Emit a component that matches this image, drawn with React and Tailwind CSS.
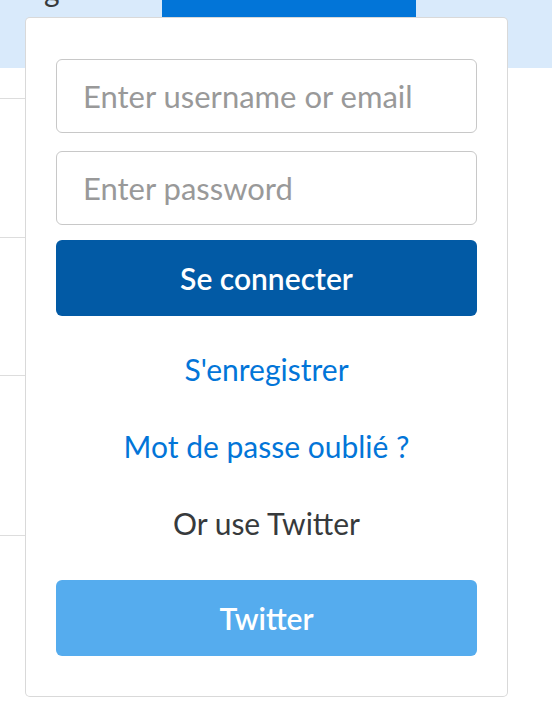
import React from "react";

const App = () => {
  return (
    <div
      className="relative min-h-[714px] bg-white overflow-hidden"
      style={{ fontFamily: "Lato, 'Noto Sans', sans-serif" }}
    >
      {/* top nav bar */}
      <div className="h-[68px] bg-[#d9eafb] flex items-start">
        <div className="w-[162px] h-[18px] overflow-hidden">
          <span className="block ml-[44px] -mt-[25px] text-[30px] leading-[30px] text-[#373a3c]">
            g
          </span>
        </div>
        <div className="w-[254px] h-[18px] bg-[#0275d8]"></div>
      </div>

      {/* list rows behind the dropdown */}
      <div className="w-[300px]">
        <div className="h-[31px] border-b border-[#dddddd]"></div>
        <div className="h-[139px] border-b border-[#dddddd]"></div>
        <div className="h-[138px] border-b border-[#dddddd]"></div>
        <div className="h-[160px] border-b border-[#dddddd]"></div>
      </div>

      {/* login dropdown */}
      <div className="absolute left-[25px] top-[17px] w-[483px] h-[680px] bg-white border border-black/15 rounded-[5px] px-[30px] pt-[41px]">
        <input
          type="text"
          placeholder="Enter username or email"
          className="block w-full h-[74px] border border-[#c8c8c8] rounded-[6px] px-[26px] text-[31px] text-[#55595c] placeholder:text-[#999999] outline-none"
        />
        <input
          type="password"
          placeholder="Enter password"
          className="block w-full h-[74px] mt-[18px] border border-[#c8c8c8] rounded-[6px] px-[26px] text-[31px] text-[#55595c] placeholder:text-[#999999] outline-none"
        />
        <button className="block w-full h-[76px] mt-[15px] bg-[#025aa5] rounded-[6px] text-white text-[30px] font-semibold">
          Se connecter
        </button>
        <div className="h-[77px] mt-[15px] flex items-center justify-center">
          <a className="text-[#0275d8] text-[30px]">S'enregistrer</a>
        </div>
        <div className="h-[77px] flex items-center justify-center">
          <a className="text-[#0275d8] text-[30px]">Mot de passe oublié ?</a>
        </div>
        <div className="h-[77px] flex items-center justify-center text-[#373a3c] text-[30px]">
          Or use Twitter
        </div>
        <button className="block w-full h-[76px] mt-[18px] bg-[#55acee] rounded-[6px] text-white text-[30px] font-semibold">
          Twitter
        </button>
      </div>
    </div>
  );
};

export default App;
